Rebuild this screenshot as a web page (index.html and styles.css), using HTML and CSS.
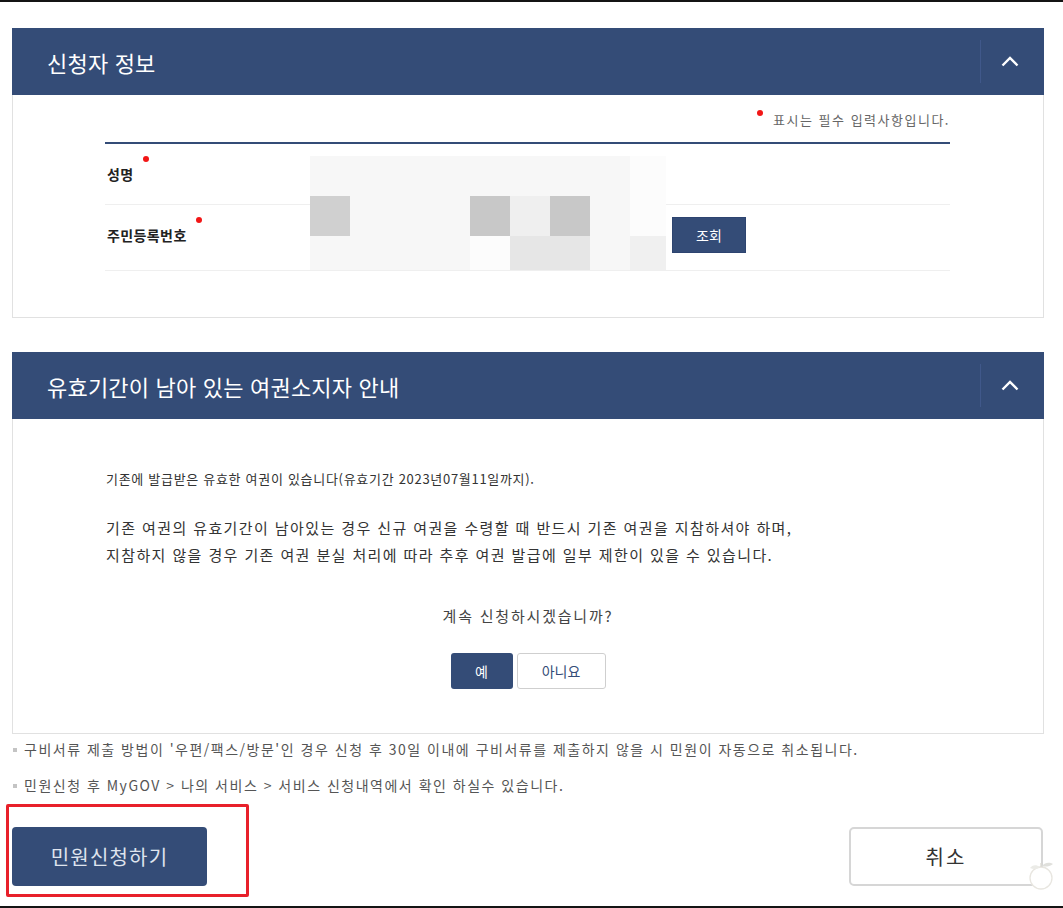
FILE: index.html
```html
<!DOCTYPE html>
<html lang="ko">
<head>
    <meta charset="UTF-8">
    <meta name="viewport" content="width=device-width, initial-scale=1.0">
    <title>여권 재발급 신청</title>
    <link rel="stylesheet" href="styles.css">
</head>
<body>

<div class="page">

    <section class="panel">
        <div class="panel-head">
            <h2>신청자 정보</h2>
            <button class="toggle" type="button" aria-label="접기">
                <svg width="18" height="11" viewBox="0 0 18 11"><path d="M1.5 9.5 L9 2 L16.5 9.5" fill="none" stroke="#fff" stroke-width="2.4"/></svg>
            </button>
        </div>
        <div class="panel-body info-body">
            <p class="req-note"><span class="req-dot"></span>표시는 필수 입력사항입니다.</p>
            <div class="form-grid">
                <div class="cell label row1">성명<span class="req-dot"></span></div>
                <div class="mask">
                    <span class="m7"></span><span class="m7"></span><span class="m7"></span><span class="m7"></span><span class="m7"></span><span class="m7"></span><span class="m7"></span><span class="m7"></span><span class="mc"></span>
                    <span class="md"></span><span class="m7"></span><span class="m7"></span><span class="m7"></span><span class="m8"></span><span class="me"></span><span class="m8"></span><span class="m7"></span><span class="mc"></span>
                    <span class="m7"></span><span class="m7"></span><span class="m7"></span><span class="m7"></span><span class="mc"></span><span class="m6"></span><span class="m6"></span><span class="m7"></span><span class="mf"></span>
                </div>
                <div class="cell side row1"></div>
                <div class="cell label row2">주민등록번호<span class="req-dot"></span></div>
                <div class="cell side row2"><button class="btn-small" type="button">조회</button></div>
            </div>
        </div>
    </section>

    <section class="panel panel-second">
        <div class="panel-head">
            <h2>유효기간이 남아 있는 여권소지자 안내</h2>
            <button class="toggle" type="button" aria-label="접기">
                <svg width="18" height="11" viewBox="0 0 18 11"><path d="M1.5 9.5 L9 2 L16.5 9.5" fill="none" stroke="#fff" stroke-width="2.4"/></svg>
            </button>
        </div>
        <div class="panel-body notice-body">
            <p class="notice-small">기존에 발급받은 유효한 여권이 있습니다(유효기간 2023년07월11일까지).</p>
            <p class="notice-main">기존 여권의 유효기간이 남아있는 경우 신규 여권을 수령할 때 반드시 기존 여권을 지참하셔야 하며,<br>지참하지 않을 경우 기존 여권 분실 처리에 따라 추후 여권 발급에 일부 제한이 있을 수 있습니다.</p>
            <p class="question">계속 신청하시겠습니까?</p>
            <div class="choice">
                <button class="btn-yes" type="button">예</button>
                <button class="btn-no" type="button">아니요</button>
            </div>
        </div>
    </section>

    <ul class="notes">
        <li>구비서류 제출 방법이 '우편/팩스/방문'인 경우 신청 후 30일 이내에 구비서류를 제출하지 않을 시 민원이 자동으로 취소됩니다.</li>
        <li>민원신청 후 MyGOV &gt; 나의 서비스 &gt; 서비스 신청내역에서 확인 하실수 있습니다.</li>
    </ul>

    <div class="actions">
        <div class="submit-wrap">
            <span class="highlight"></span>
            <button class="btn-submit" type="button">민원신청하기</button>
        </div>
        <div class="cancel-wrap">
            <button class="btn-cancel" type="button">취소</button>
            <svg class="apple" width="30" height="32" viewBox="0 0 30 32">
                <circle cx="15" cy="18" r="11" fill="#fff" stroke="#e8e6e0" stroke-width="1.3"/>
                <path d="M15 7 L15 3" stroke="#dcdad3" stroke-width="1.3"/>
                <path d="M16 6 C19 2 24 2 27 4 C23 7 19 7 16 6 Z" fill="#e0e0dc"/>
                <path d="M14 7 C10 4 6 5 4 8 C8 10 12 9 14 7 Z" fill="#ebebe7"/>
            </svg>
        </div>
    </div>

</div>

</body>
</html>
```

FILE: styles.css
```css
body {
    margin: 0;
    height: 908px;
    box-sizing: border-box;
    border-top: 2px solid #141414;
    border-bottom: 2px solid #141414;
    overflow: hidden;
    font-family: "Noto Sans CJK KR", "Noto Sans", sans-serif;
    color: #333;
    background: #fff;
}
.page {
    width: 1032px;
    padding: 26px 0 0 12px;
}
p {
    margin: 0;
}
button {
    font-family: inherit;
    cursor: pointer;
}

/* panels */
.panel-second {
    margin-top: 34px;
}
.panel-head {
    height: 67px;
    background: #344c77;
    display: flex;
    align-items: center;
    justify-content: space-between;
}
.panel-head h2 {
    margin: 0 0 0 35px;
    font-size: 22px;
    font-weight: 400;
    color: #fff;
    letter-spacing: 0.2px;
}
.toggle {
    width: 64px;
    height: 43px;
    border: none;
    border-left: 1px solid #40588a;
    background: transparent;
    display: flex;
    align-items: center;
    justify-content: center;
    padding: 0 6px 0 0;
}
.panel-body {
    border: 1px solid #e1e1e1;
    border-top: none;
}

/* applicant info */
.info-body {
    padding: 14px 93px 0 92px;
    height: 208px;
}
.req-note {
    text-align: right;
    font-size: 13px;
    line-height: 22px;
    color: #666;
    letter-spacing: 1.5px;
}
.req-note .req-dot {
    margin: 0 10px 0 0;
    top: -9px;
}
.req-dot {
    display: inline-block;
    position: relative;
    top: -15px;
    width: 6px;
    height: 6px;
    margin-left: 9px;
    border-radius: 50%;
    background: #f21616;
}
.form-grid {
    margin-top: 11px;
    border-top: 2px solid #344c77;
    display: grid;
    grid-template-columns: 205px 356px 1fr;
    grid-template-rows: 61px 66px;
}
.cell {
    border-bottom: 1px solid #efefef;
    display: flex;
    align-items: center;
}
.label {
    padding-left: 2px;
    font-size: 14px;
    font-weight: 700;
    letter-spacing: 0.4px;
    color: #222;
}
.row1 {
    grid-row: 1;
}
.row2 {
    grid-row: 2;
}
.label.row2 {
    padding-bottom: 6px;
}
.side {
    grid-column: 3;
}
.mask {
    grid-column: 2;
    grid-row: 1 / span 2;
    align-self: end;
    height: 114px;
    border-bottom: 1px solid #efefef;
    display: grid;
    grid-template-columns: repeat(8, 40px) 36px;
    grid-template-rows: 40px 40px 34px;
}
.m6 { background: #e6e6e6; }
.m7 { background: #f7f7f7; }
.m8 { background: #c8c8c8; }
.mc { background: #fcfcfc; }
.md { background: #d0d0d0; }
.me { background: #efefef; }
.mf { background: #f0f0f0; }
.btn-small {
    margin: 0 0 6px 6px;
    width: 74px;
    height: 36px;
    border: 1px solid #2d4470;
    background: #344c77;
    color: #fff;
    font-size: 14px;
}

/* passport notice */
.notice-body {
    height: 315px;
    box-sizing: border-box;
    padding: 50px 93px 0 93px;
}
.notice-small {
    font-size: 13px;
    line-height: 20px;
    letter-spacing: 0.7px;
    color: #333;
}
.notice-main {
    margin-top: 25px;
    font-size: 15px;
    line-height: 27px;
    letter-spacing: 1.4px;
    color: #333;
}
.question {
    margin-top: 37px;
    text-align: center;
    font-size: 15px;
    line-height: 22px;
    letter-spacing: 1.8px;
    color: #444;
}
.choice {
    margin-top: 26px;
    display: flex;
    justify-content: center;
    gap: 4px;
}
.btn-yes,
.btn-no {
    height: 36px;
    border-radius: 3px;
    font-size: 14px;
}
.btn-yes {
    width: 62px;
    border: none;
    background: #344c77;
    color: #fff;
}
.btn-no {
    width: 89px;
    border: 1px solid #cfcfcf;
    background: #fff;
    color: #344c77;
}

/* notes */
.notes {
    list-style: none;
    margin: 5px 0 0;
    padding: 0;
}
.notes li {
    position: relative;
    padding-left: 12px;
    font-size: 14px;
    line-height: 20px;
    letter-spacing: 1.5px;
    color: #555;
    margin-bottom: 16px;
}
.notes li::before {
    content: "";
    position: absolute;
    left: 1px;
    top: 9px;
    width: 4px;
    height: 4px;
    background: #c4c4c4;
}
.notes li:last-child {
    margin-bottom: 0;
}

/* bottom buttons */
.actions {
    margin-top: 32px;
    display: flex;
    justify-content: space-between;
    padding-right: 1px;
}
.submit-wrap,
.cancel-wrap {
    position: relative;
}
.highlight {
    position: absolute;
    left: -6px;
    top: -23px;
    width: 243px;
    height: 93px;
    box-sizing: border-box;
    border: 3px solid #e8202a;
    border-radius: 2px;
}
.btn-submit {
    width: 195px;
    height: 59px;
    border: none;
    border-radius: 4px;
    background: #344c77;
    color: #dfe4ee;
    font-size: 20px;
    letter-spacing: 1.2px;
}
.btn-cancel {
    width: 194px;
    height: 59px;
    border: 2px solid #d6d6d6;
    border-radius: 5px;
    background: #fff;
    color: #333;
    font-size: 20px;
    letter-spacing: 2px;
}
.apple {
    position: absolute;
    right: -13px;
    bottom: -6px;
}
```
